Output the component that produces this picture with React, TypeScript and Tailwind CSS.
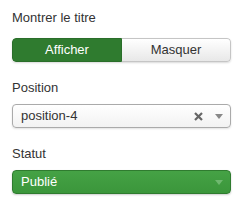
import React from "react";

export default function App() {
  return (
    <div className="w-[250px] h-[208px] bg-white pl-3 pr-[19px] pt-[9px] text-[13px] text-[#333]" style={{ fontFamily: '"Liberation Sans", Arial, sans-serif' }}>
      <div className="leading-[18px]">Montrer le titre</div>
      <div className="mt-[11px] flex h-[24px] rounded-[4px] overflow-hidden shadow-[0_1px_2px_rgba(0,0,0,0.15)]">
        <div className="flex-1 flex items-center justify-center bg-[#2f7b2f] text-white border border-[#2a6e2a] rounded-l-[4px]">Afficher</div>
        <div className="flex-1 flex items-center justify-center bg-gradient-to-b from-white to-[#e8e8e8] border border-[#c5c5c5] border-l-0 rounded-r-[4px] text-[#333]">Masquer</div>
      </div>
      <div className="mt-[17px] leading-[18px]">Position</div>
      <div className="mt-[7px] flex items-center h-[24px] rounded-[4px] border border-[#aaa] bg-gradient-to-b from-white to-[#f2f2f2] pl-[8px] pr-[7px] shadow-[0_1px_2px_rgba(0,0,0,0.12)]">
        <span className="flex-1">position-4</span>
        <svg width="9" height="9" viewBox="0 0 9 9" className="mr-[12px]">
          <path d="M1 1L8 8M8 1L1 8" stroke="#666" strokeWidth="2.2" strokeLinecap="butt" />
        </svg>
        <svg width="8" height="5" viewBox="0 0 8 5"><path d="M0 0H8L4 5Z" fill="#888" /></svg>
      </div>
      <div className="mt-[17px] leading-[18px]">Statut</div>
      <div className="mt-[7px] flex items-center h-[24px] rounded-[4px] border border-[#2f7b2f] bg-gradient-to-b from-[#45a245] to-[#3b963b] pl-[8px] pr-[7px] text-white shadow-[0_1px_2px_rgba(0,0,0,0.2)]">
        <span className="flex-1">Publié</span>
        <svg width="8" height="5" viewBox="0 0 8 5"><path d="M0 0H8L4 5Z" fill="#6fb86f" /></svg>
      </div>
    </div>
  );
}
